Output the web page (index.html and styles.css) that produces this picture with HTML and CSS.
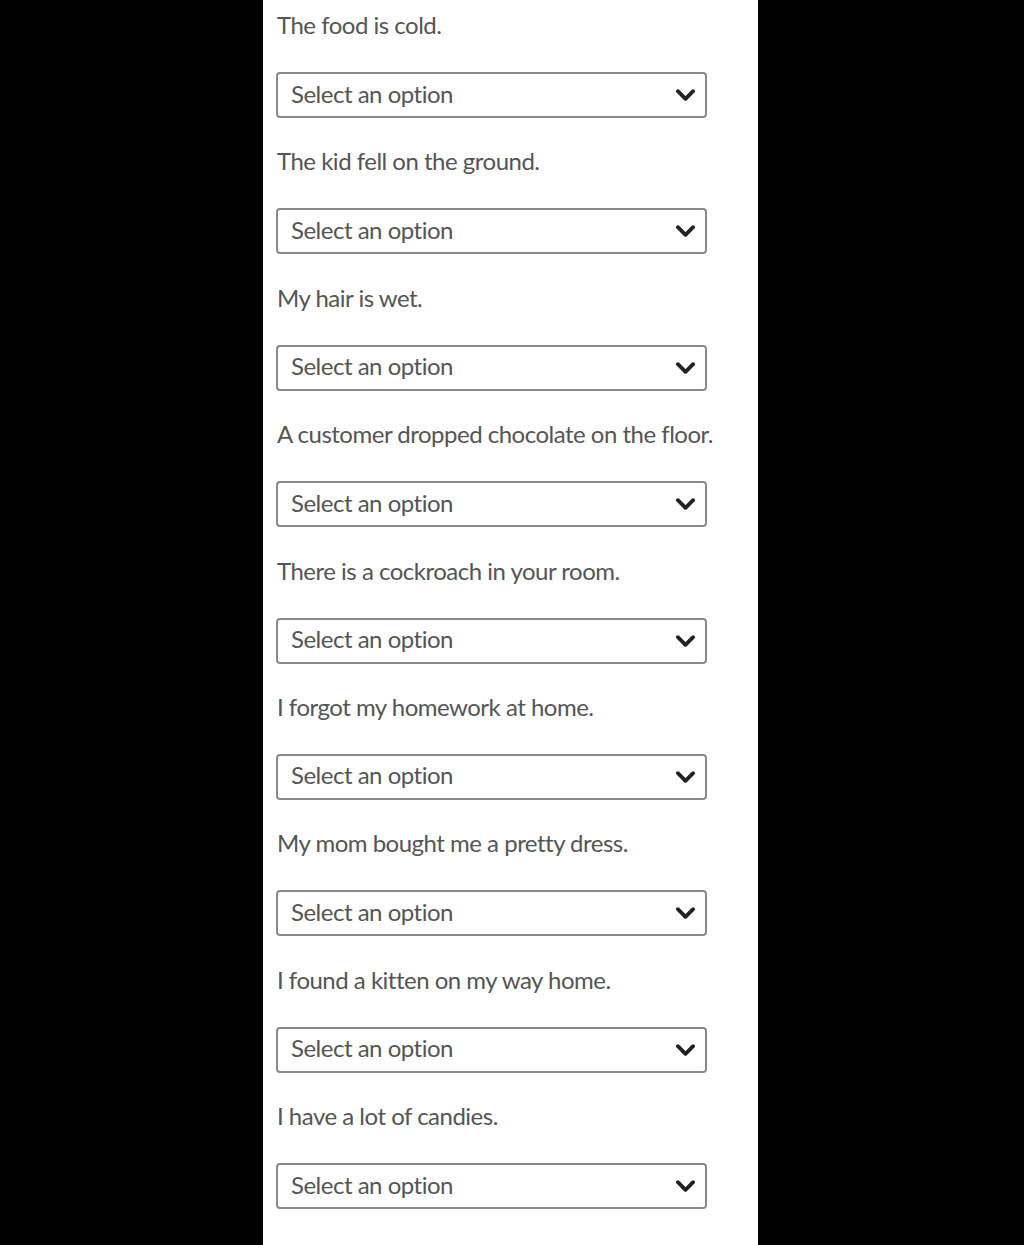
FILE: index.html
```html
<!DOCTYPE html>
<html lang="en">

<head>
    <meta charset="UTF-8">
    <meta name="viewport" content="width=device-width, initial-scale=1.0">
    <title>Feelings Quiz</title>
    <link rel="stylesheet" href="styles.css">
</head>

<body>
    <main class="quiz">
        <div class="question">
            <p class="question-text">The food is cold.</p>
            <div class="select-wrap">
                <select><option>Select an option</option></select>
                <svg class="chevron" viewBox="0 0 20 12"><path d="M2 2 L10 10 L18 2" /></svg>
            </div>
        </div>
        <div class="question">
            <p class="question-text">The kid fell on the ground.</p>
            <div class="select-wrap">
                <select><option>Select an option</option></select>
                <svg class="chevron" viewBox="0 0 20 12"><path d="M2 2 L10 10 L18 2" /></svg>
            </div>
        </div>
        <div class="question">
            <p class="question-text">My hair is wet.</p>
            <div class="select-wrap">
                <select><option>Select an option</option></select>
                <svg class="chevron" viewBox="0 0 20 12"><path d="M2 2 L10 10 L18 2" /></svg>
            </div>
        </div>
        <div class="question">
            <p class="question-text">A customer dropped chocolate on the floor.</p>
            <div class="select-wrap">
                <select><option>Select an option</option></select>
                <svg class="chevron" viewBox="0 0 20 12"><path d="M2 2 L10 10 L18 2" /></svg>
            </div>
        </div>
        <div class="question">
            <p class="question-text">There is a cockroach in your room.</p>
            <div class="select-wrap">
                <select><option>Select an option</option></select>
                <svg class="chevron" viewBox="0 0 20 12"><path d="M2 2 L10 10 L18 2" /></svg>
            </div>
        </div>
        <div class="question">
            <p class="question-text">I forgot my homework at home.</p>
            <div class="select-wrap">
                <select><option>Select an option</option></select>
                <svg class="chevron" viewBox="0 0 20 12"><path d="M2 2 L10 10 L18 2" /></svg>
            </div>
        </div>
        <div class="question">
            <p class="question-text">My mom bought me a pretty dress.</p>
            <div class="select-wrap">
                <select><option>Select an option</option></select>
                <svg class="chevron" viewBox="0 0 20 12"><path d="M2 2 L10 10 L18 2" /></svg>
            </div>
        </div>
        <div class="question">
            <p class="question-text">I found a kitten on my way home.</p>
            <div class="select-wrap">
                <select><option>Select an option</option></select>
                <svg class="chevron" viewBox="0 0 20 12"><path d="M2 2 L10 10 L18 2" /></svg>
            </div>
        </div>
        <div class="question">
            <p class="question-text">I have a lot of candies.</p>
            <div class="select-wrap">
                <select><option>Select an option</option></select>
                <svg class="chevron" viewBox="0 0 20 12"><path d="M2 2 L10 10 L18 2" /></svg>
            </div>
        </div>
    </main>
</body>

</html>
```

FILE: styles.css
```css
html, body {
    margin: 0;
    padding: 0;
    height: 100%;
}

body {
    background-color: #000;
    font-family: 'Lato', sans-serif;
    color: #555;
}

.quiz {
    width: 495px;
    min-height: 100%;
    margin-left: 263px;
    background-color: #fff;
    padding: 10px 0 0 13px;
    box-sizing: border-box;
}

.question {
    margin-bottom: 28.4px;
}

.question-text {
    margin: 0 0 32px 1px;
    font-size: 24px;
    line-height: 30px;
    letter-spacing: -0.5px;
    color: #555;
}

.select-wrap {
    position: relative;
    width: 431px;
}

.select-wrap select {
    display: block;
    width: 100%;
    height: 46px;
    padding: 0 40px 4px 13px;
    font-family: 'Lato', sans-serif;
    font-size: 24px;
    letter-spacing: -0.5px;
    color: #555;
    background-color: #fff;
    border: 2px solid #8a8a8a;
    border-radius: 4px;
    appearance: none;
    -webkit-appearance: none;
    outline: none;
}

/* arrow drawn over the select */
.chevron {
    position: absolute;
    right: 12px;
    top: 17px;
    width: 19px;
    height: 12px;
    pointer-events: none;
}

.chevron path {
    fill: none;
    stroke: #222;
    stroke-width: 4;
    stroke-linecap: round;
    stroke-linejoin: round;
}
```
